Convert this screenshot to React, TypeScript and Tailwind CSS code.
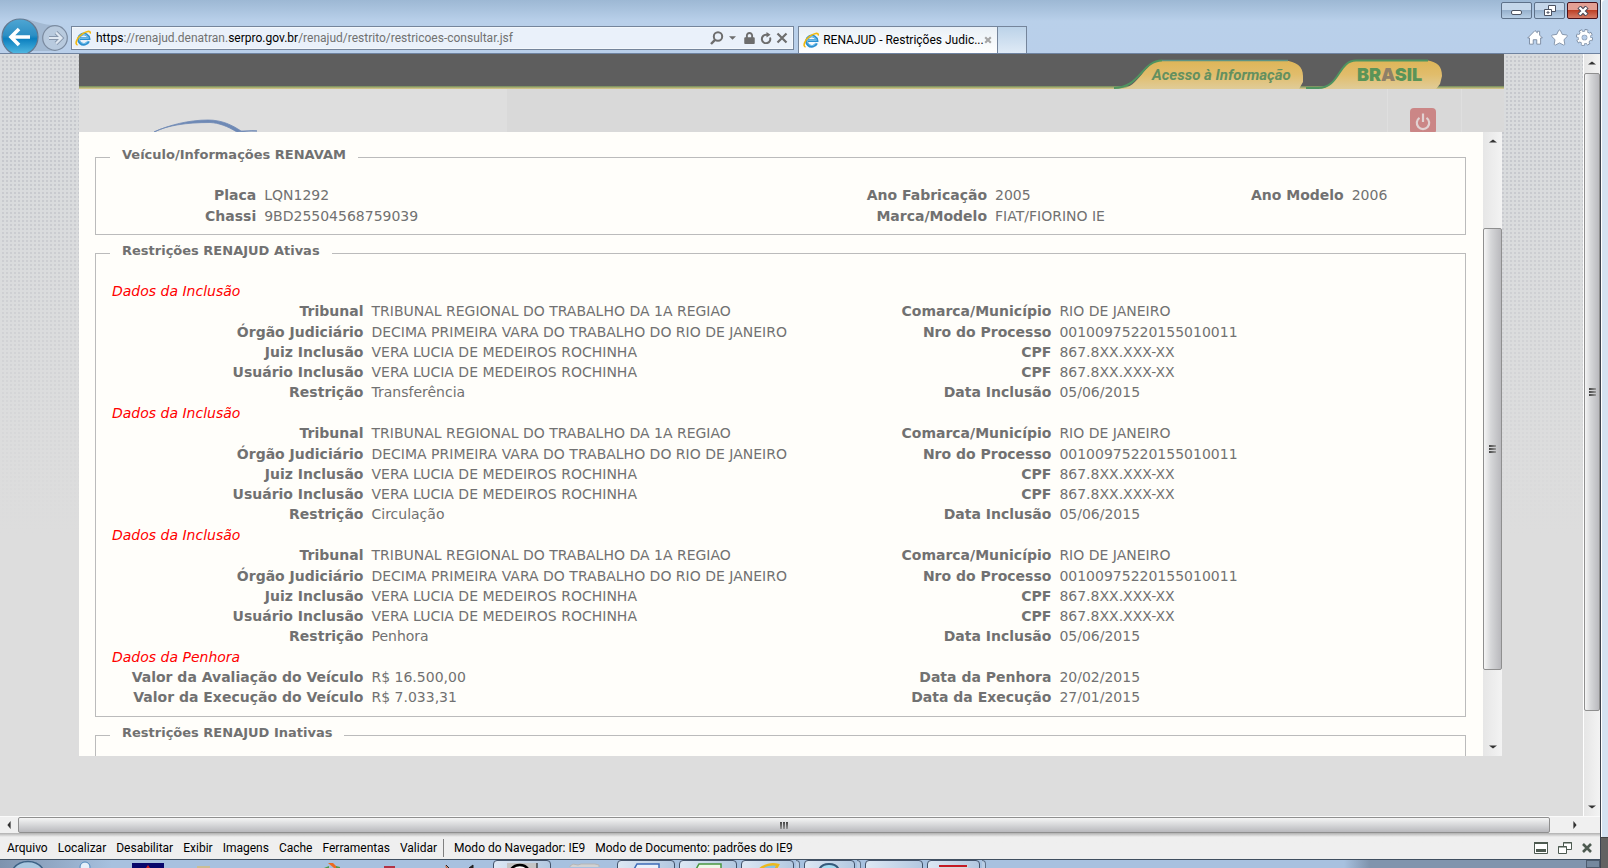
import { FaLock, FaStar } from "react-icons/fa";

const restricoes = [
  { id: 1, tipo: "Transferência" },
  { id: 2, tipo: "Circulação" },
  { id: 3, tipo: "Penhora" },
];

const devMenu = ["Arquivo", "Localizar", "Desabilitar", "Exibir", "Imagens", "Cache", "Ferramentas", "Validar"];

function IeIcon() {
  return (
    <svg viewBox="0 0 16 16" className="w-4 h-4 shrink-0" aria-hidden="true">
      <path d="M13.6 11.2A5.2 5.2 0 1 1 14 8.7H5" fill="none" stroke="#2b8fd0" strokeWidth="2.8" />
      <path d="M13 11A4.6 4.6 0 1 1 13.4 8.3H5" fill="none" stroke="#7cc6ee" strokeWidth="1" />
      <path d="M2.6 15C-.6 14.6 1.6 8 7 4.2 11 1.2 15.6 0 15.4 3.6" fill="none" stroke="#f2b90f" strokeWidth="1.6" />
    </svg>
  );
}

function Grip({ vertical }: { vertical?: boolean }) {
  return (
    <span className={vertical ? "flex flex-col gap-px" : "flex gap-px"}>
      {[0, 1, 2].map((i) => (
        <span key={i} className={vertical ? "w-[7px] h-[2px] bg-linear-to-r from-[#444] to-[#999]" : "w-[2px] h-[7px] bg-linear-to-b from-[#444] to-[#999]"} />
      ))}
    </span>
  );
}

function Arrow({ points, label }: { points: string; label: string }) {
  return (
    <button className="w-[18px] h-[18px] shrink-0 flex items-center justify-center" aria-label={label}>
      <svg viewBox="0 0 10 10" className="w-2 h-2">
        <polygon points={points} fill="#333" />
      </svg>
    </button>
  );
}

function VScroll({ className, before, thumb, after }: { className: string; before: string; thumb: string; after: string }) {
  return (
    <div className={`shrink-0 flex flex-col items-center bg-linear-to-r from-[#e6e6e6] to-[#f3f3f3] ${className}`}>
      <Arrow points="0,7 5,3 10,7" label="Rolar para cima" />
      <div className={`basis-0 ${before}`} />
      <div className={`basis-0 w-full flex items-center justify-center rounded-xs border border-[#8f8f8f] bg-linear-to-r from-[#f5f5f5] from-0% via-[#d6d7d9] via-40% to-[#b9b9bd] ${thumb}`}>
        <Grip vertical />
      </div>
      <div className={`basis-0 ${after}`} />
      <Arrow points="0,3 5,7 10,3" label="Rolar para baixo" />
    </div>
  );
}

// Barra superior do navegador
function BrowserBar() {
  return (
    <header className="h-[54px] shrink-0 flex items-end border-b border-[#6f83a0] bg-linear-to-b from-[#9db8d4] from-0% via-[#b9d0ea] via-40% to-[#b9cfea] font-['Roboto','Noto_Sans',sans-serif] text-[12px] leading-4 text-black overflow-hidden">
      <svg viewBox="0 0 71 36" className="w-[71px] h-[36px] shrink-0" role="img" aria-label="Voltar e avançar">
        <defs>
          <linearGradient id="back" x1="0" y1="0" x2="0" y2="1">
            <stop offset="0" stopColor="#4fa6d3" />
            <stop offset=".45" stopColor="#2d8fc4" />
            <stop offset=".55" stopColor="#0b7fbf" />
            <stop offset="1" stopColor="#57bde4" />
          </linearGradient>
        </defs>
        <path d="M22 2C34 2 38 8 55 8v26H20z" fill="#a3b9d2" />
        <circle cx="20" cy="20" r="18" fill="url(#back)" stroke="#65788f" strokeWidth="1.2" />
        <path d="M30 20H12M19 12l-8 8 8 8" fill="none" stroke="#fff" strokeWidth="3.6" />
        <circle cx="55" cy="21" r="12.3" fill="#b8cade" stroke="#7b8ba0" strokeWidth="1.2" />
        <path d="M49 21h11M56 15.500l5.500 5.500-5.500 5.500" fill="none" stroke="#8696ac" strokeWidth="4" />
        <path d="M49 21h11M56 15.500l5.500 5.500-5.500 5.500" fill="none" stroke="#dfe8f2" strokeWidth="2.200" />
      </svg>
      <div className="w-[45.2%] h-6 mb-[3px] flex items-center pl-[3px] pr-[5px] border border-[#75859b] bg-[#eaf1fa] outline outline-[#f4f8fc] -outline-offset-2">
        <IeIcon />
        <a href="#" className="pl-[5px] grow truncate text-[#717171]">
          <span className="text-black">https</span>://renajud.denatran.<span className="text-black">serpro.gov.br</span>/renajud/restrito/restricoes-consultar.jsf
        </a>
        <div className="flex items-center text-[#6d6d6d]">
          <svg viewBox="0 0 14 14" className="w-[14px] h-[14px]" fill="none" stroke="currentColor" strokeWidth="2">
            <circle cx="8" cy="5.500" r="4.200" />
            <path d="M5 8.800L1 13" strokeWidth="2.400" />
          </svg>
          <svg viewBox="0 0 8 4" className="w-[7px] h-1 ml-[5px] mr-2">
            <path d="M0 0h8L4 4z" fill="currentColor" />
          </svg>
          <FaLock className="w-[11px] h-3" />
          <svg viewBox="0 0 12 12" className="w-3 h-3 ml-[5px]" fill="none" stroke="currentColor" strokeWidth="2">
            <path d="M10 5.500A4.200 4.200 0 1 1 6 2.800h2.500" />
            <path d="M6.500 0L10.500 2.800 6.500 5.600z" fill="currentColor" stroke="none" />
          </svg>
          <svg viewBox="0 0 12 12" className="w-3 h-3 ml-1" fill="none" stroke="currentColor" strokeWidth="2.200">
            <path d="M1.500 1.500l9 9M10.500 1.500l-9 9" />
          </svg>
        </div>
      </div>
      <div className="ml-1 w-[200px] h-[27px] flex items-center pl-1 pr-[5px] border border-b-0 border-[#75859b] bg-linear-to-b from-[#e9f0f6] to-white">
        <IeIcon />
        <span className="pl-1 grow whitespace-nowrap">RENAJUD - Restrições Judic...</span>
        <button aria-label="Fechar guia">
          <svg viewBox="0 0 10 10" className="w-2 h-2" stroke="#a5a5a5" strokeWidth="2.600">
            <path d="M1.500 1.500l7 7M8.500 1.500l-7 7" />
          </svg>
        </button>
      </div>
      <button className="w-[29px] h-[27px] border border-b-0 border-l-0 border-[#75859b] bg-linear-to-b from-[#bcd3e9] to-[#dfeaf6]" aria-label="Nova guia" />
      <div className="grow self-stretch flex flex-col items-end justify-between pt-[2px] pb-[7px] pr-[2px]">
        <div className="flex gap-[2px]">
          <button className="w-[31px] h-[17px] flex items-center justify-center rounded-xs border border-[#5e7189] bg-linear-to-b from-[#c5d7ea] from-50% via-[#97b1cd] via-50% to-[#b7cee5]" aria-label="Minimizar">
            <span className="w-[11px] h-[5px] mt-1 rounded-xs border border-[#4c5362] bg-white" />
          </button>
          <button className="w-[31px] h-[17px] flex items-center justify-center rounded-xs border border-[#5e7189] bg-linear-to-b from-[#c5d7ea] from-50% via-[#97b1cd] via-50% to-[#b7cee5]" aria-label="Restaurar">
            <svg viewBox="0 0 12 11" className="w-3 h-[11px]" fill="#fff" stroke="#4c5362">
              <path d="M4.500.5h7v6h-7z" />
              <path d="M.5 4.500h7v6h-7z" />
              <path d="M3 7h2v1H3z" />
            </svg>
          </button>
          <button className="w-[31px] h-[17px] flex items-center justify-center rounded-xs border border-[#4a1119] bg-linear-to-b from-[#e3a094] from-50% via-[#bd4026] via-50% to-[#d47b66]" aria-label="Fechar">
            <svg viewBox="0 0 12 10" className="w-3 h-[10px]" fill="none">
              <path d="M2 1l8 8M10 1L2 9" stroke="#4c4a58" strokeWidth="4.500" />
              <path d="M2.500 1.500l7 7M9.500 1.500l-7 7" stroke="#fff" strokeWidth="2.400" />
            </svg>
          </button>
        </div>
        <div className="flex items-center gap-2 pr-[5px]">
          <svg viewBox="0 0 18 18" className="w-4 h-[17px]" fill="#fff" stroke="#76879e">
            <path d="M9 1.200l2.600 2.500V2h2.600v4.300L17.300 9.500h-2V16.500h-4.300v-5H7v5H2.800v-7h-2z" />
          </svg>
          <FaStar className="w-[17px] h-[17px] text-white overflow-visible" stroke="#76879e" strokeWidth={28} />
          <svg viewBox="0 0 18 18" className="w-[17px] h-[17px]">
            <circle cx="9" cy="9" r="7.300" fill="none" stroke="#76879e" strokeWidth="3.400" strokeDasharray="3.400 2.330" />
            <circle cx="9" cy="9" r="4.600" fill="none" stroke="#76879e" strokeWidth="5" />
            <circle cx="9" cy="9" r="7" fill="none" stroke="#fff" strokeWidth="2.200" strokeDasharray="2.400 3.098" strokeDashoffset="-.5" />
            <circle cx="9" cy="9" r="4.700" fill="none" stroke="#fff" strokeWidth="3.400" />
            <circle cx="9" cy="9" r="2.400" fill="#b9cfea" />
          </svg>
        </div>
      </div>
    </header>
  );
}

// Barra do governo + topo do sistema
function SiteHeader() {
  return (
    <div className="shrink-0">
      <div className="h-[35px] flex justify-end pr-14 bg-linear-to-b from-[#5e5e5e] from-[32px] via-[#6f8a5c] via-[32px] to-[#e0cc8c]">
        <a href="#" className="relative w-[196px] flex items-center pl-[42px] pt-[7px] font-['Roboto',sans-serif] font-bold italic text-[15px] leading-4 whitespace-nowrap text-[#64905f]">
          <svg viewBox="0 0 196 35" className="absolute inset-0 w-full h-full" aria-hidden="true">
            <defs>
              <linearGradient id="gold" x1="0" y1="0" x2="0" y2="1">
                <stop offset="0" stopColor="#deb558" />
                <stop offset=".5" stopColor="#e1bd6c" />
                <stop offset="1" stopColor="#e0cc98" />
              </linearGradient>
            </defs>
            <path d="M10 35C30 34 34 6.500 52 6.500H176C186 8 193 12 193 22V28L189 35z" fill="url(#gold)" />
            <path d="M4 34C30 34 32 6.500 52 6.500" fill="none" stroke="#4f9460" strokeWidth="2" />
            <path d="M52 6.500H178" stroke="#5f9484" strokeWidth="1.500" />
          </svg>
          <span className="relative">Acesso à Informação</span>
        </a>
        <a href="#" className="relative w-[142px] flex items-center pl-[51px] pt-[7px] font-['Inter',sans-serif] font-black text-[18px] leading-4 text-[#5a9458]">
          <svg viewBox="0 0 142 35" className="absolute inset-0 w-full h-full" aria-hidden="true">
            <path d="M14 35C34 32 32 6.500 50 6.500H122C131 8 136 12 136 22L134 30 130 35z" fill="url(#gold)" />
            <path d="M0 34H12C34 34 32 6.500 50 6.500H122" fill="none" stroke="#4f9460" strokeWidth="2" />
          </svg>
          <span className="relative">BR<span className="text-[#8f8068]">A</span>SIL</span>
        </a>
      </div>
      <div className="h-[43px] flex items-start bg-[#d9d9d9] overflow-hidden">
        <div className="w-[30%] h-full bg-[#dedede]">
          <svg viewBox="0 0 200 43" className="w-[200px] h-[43px]" role="img" aria-label="RENAJUD">
            <path d="M75 43C90 36 110 31 129 31c14 0 24 5 33 11h16c-8-1-14 1-20 1-10-6-18-9-27-9.500-24 0-43 3-56 9.500z" fill="#6e89b5" stroke="#6e89b5" strokeWidth=".8" />
          </svg>
        </div>
        <div className="grow" />
        <div className="w-[75px] h-full pt-[19px] pl-[22px] mr-[42px] border-x border-[#dfdfdf]">
          <button className="w-[26px] h-[26px] rounded-sm bg-[#cb8686] flex items-center justify-center pt-[2px]" aria-label="Sair">
            <svg viewBox="0 0 16 18" className="w-4 h-[18px]" fill="none" stroke="#e2d2d2" strokeWidth="2.200">
              <path d="M4.500 4.800a6.200 6.200 0 1 0 7 0" />
              <path d="M8 .5V9" />
            </svg>
          </button>
        </div>
      </div>
    </div>
  );
}

function Legend({ children }: { children: string }) {
  return <legend className="px-3 h-5 text-[13px] leading-4 font-bold">{children}</legend>;
}

const labelClass = "pr-1 text-right font-bold whitespace-nowrap";
const valueClass = "pl-1 text-left whitespace-nowrap";

function Row({ data, tall }: { data: string[]; tall?: boolean }) {
  return (
    <tr className={tall ? "h-[21px]" : "h-5"}>
      {data.map((text, i) =>
        i % 2 === 0 ? (
          <th key={i} scope="row" className={labelClass}>{text}</th>
        ) : (
          <td key={i} className={valueClass}>{text}</td>
        )
      )}
    </tr>
  );
}

function Grupo({ titulo, children }: { titulo: string; children: React.ReactNode }) {
  return (
    <table className="w-full table-fixed mb-px">
      <caption className="h-5 pl-[2px] text-left italic text-[#ff0000]">{titulo}</caption>
      <colgroup>
        <col className="w-[19.2%]" />
        <col className="w-[35%]" />
        <col className="w-[16.3%]" />
        <col />
      </colgroup>
      <tbody>{children}</tbody>
    </table>
  );
}

function Detalhes() {
  return (
    <main className="grow min-h-0 flex mr-[2px] bg-[#fffefa] overflow-hidden font-['DejaVu_Sans',Verdana,sans-serif] text-[14px] leading-5 text-[#717171]">
      <div className="grow min-w-0 pl-4 pr-[17px] pt-[15px]">
        <fieldset className="px-[14px] pt-[17px] pb-2 border border-[#bbb]">
          <Legend>Veículo/Informações RENAVAM</Legend>
          <table className="w-full table-fixed">
            <colgroup>
              <col className="w-[11.2%]" />
              <col className="w-[40%]" />
              <col className="w-[14.500%]" />
              <col className="w-[14%]" />
              <col className="w-[12.600%]" />
              <col />
            </colgroup>
            <tbody>
              <Row tall data={["Placa", "LQN1292", "Ano Fabricação", "2005", "Ano Modelo", "2006"]} />
              <Row tall data={["Chassi", "9BD25504568759039", "Marca/Modelo", "FIAT/FIORINO IE"]} />
            </tbody>
          </table>
        </fieldset>
        <fieldset className="mt-2 px-[14px] pt-[18px] pb-2 border border-[#bbb]">
          <Legend>Restrições RENAJUD Ativas</Legend>
          {restricoes.map((r) => (
            <Grupo key={r.id} titulo="Dados da Inclusão">
              <Row data={["Tribunal", "TRIBUNAL REGIONAL DO TRABALHO DA 1A REGIAO", "Comarca/Município", "RIO DE JANEIRO"]} />
              <Row tall data={["Órgão Judiciário", "DECIMA PRIMEIRA VARA DO TRABALHO DO RIO DE JANEIRO", "Nro do Processo", "00100975220155010011"]} />
              <Row data={["Juiz Inclusão", "VERA LUCIA DE MEDEIROS ROCHINHA", "CPF", "867.8XX.XXX-XX"]} />
              <Row data={["Usuário Inclusão", "VERA LUCIA DE MEDEIROS ROCHINHA", "CPF", "867.8XX.XXX-XX"]} />
              <Row data={["Restrição", r.tipo, "Data Inclusão", "05/06/2015"]} />
            </Grupo>
          ))}
          <Grupo titulo="Dados da Penhora">
            <Row data={["Valor da Avaliação do Veículo", "R$ 16.500,00", "Data da Penhora", "20/02/2015"]} />
            <Row data={["Valor da Execução do Veículo", "R$ 7.033,31", "Data da Execução", "27/01/2015"]} />
          </Grupo>
        </fieldset>
        <fieldset className="mt-2 px-[14px] h-[60px] border border-[#bbb]">
          <Legend>Restrições RENAJUD Inativas</Legend>
        </fieldset>
      </div>
      <VScroll className="w-[19px]" before="grow-[78]" thumb="grow-[441]" after="grow-[68]" />
    </main>
  );
}

function DevBar() {
  return (
    <div className="shrink-0 h-[27px] pt-1 border-b border-[#3f4f60] bg-linear-to-b from-[#b0b0b0] from-0% via-[#efefef] via-[4px] to-[#efefef] flex items-center px-[7px] gap-[10px] font-['Roboto','Noto_Sans',sans-serif] text-[12px] leading-4 text-black whitespace-nowrap">
      {devMenu.map((item) => (
        <button key={item}>{item}</button>
      ))}
      <span className="w-px h-[18px] -ml-1 bg-[#808080]" />
      <button>Modo do Navegador: IE9</button>
      <button>Modo de Documento: padrões do IE9</button>
      <div className="grow flex justify-end items-center gap-[10px] pr-px text-[#4d5a50]">
        <button aria-label="Minimizar painel">
          <svg viewBox="0 0 14 12" className="w-[14px] h-3" fill="#fff" stroke="currentColor">
            <path d="M.5.500h13v11H.5z" />
            <path d="M0 1h14" strokeWidth="2" />
            <path d="M2 8.500h10" strokeWidth="3" />
          </svg>
        </button>
        <button aria-label="Desencaixar painel">
          <svg viewBox="0 0 14 12" className="w-[14px] h-3" fill="#fff" stroke="currentColor">
            <path d="M5.500.500h8v7h-8zM5 1h9" />
            <path d="M.5 4.500h8v7h-8zM0 5h9" />
          </svg>
        </button>
        <button aria-label="Fechar painel">
          <svg viewBox="0 0 10 10" className="w-[10px] h-[10px]" stroke="currentColor" strokeWidth="2.600">
            <path d="M1 1l8 8M9 1L1 9" />
          </svg>
        </button>
      </div>
    </div>
  );
}

const atalhos = [
  <circle key="a" cx="15" cy="7" r="5" fill="#e6f0fa" stroke="#4e88bd" />,
  <g key="b"><path d="M0 3h32v8H0z" fill="#06066b" /><path d="M14 8l2-3 2 3z" fill="#c22" /></g>,
  <path key="c" d="M3 6h13v6H3z" fill="#c9bd95" />,
  null,
  <g key="e"><path d="M10 3h5l5 5h-4z" fill="#ec6a1f" /><path d="M6 8l5-2v2zM18 6l4 1v1h-4z" fill="#4f9b49" /></g>,
  <path key="f" d="M4 6h11v5H4z" fill="#b23345" />,
  <g key="g"><path d="M3 5l3 3H4z" fill="#d9622b" /><path d="M4 5l3 3M27 8l4-3v3z" fill="#222" stroke="#222" /></g>,
];

const janelas = [
  { w: "w-[58px]", stack: false, icon: <g><path d="M0 2h30v8H0z" fill="#c4c4c4" /><path d="M3 10C7 2 19 2 22 10" fill="#fff" stroke="#000" strokeWidth="2.500" /><path d="M30 2v7" stroke="#000" /></g> },
  { w: "w-[58px]", stack: false, icon: <path d="M1 9V6l3-2 5 1 3-1h14l4 1v6z" fill="#d2d2d2" stroke="#b5b5b5" />, flat: true },
  { w: "w-[58px]", stack: false, icon: <path d="M2 10l4-7h22v7" fill="#e9f0fb" stroke="#3e6bb8" strokeWidth="1.500" /> },
  { w: "w-[58px]", stack: false, icon: <path d="M2 10l4-7h22v7" fill="#eef6e9" stroke="#4a9640" strokeWidth="1.500" /> },
  { w: "w-[53px]", stack: true, icon: <path d="M7 9C12 4 20 2 26 4l-3 5" fill="#84c3ea" stroke="#ecb81c" strokeWidth="2.500" /> },
  { w: "w-[51px]", stack: true, icon: <path d="M5 9C8 1 22 1 25 9" fill="#a6dcf2" stroke="#35597a" strokeWidth="2" /> },
  { w: "w-[58px]", stack: false, icon: null },
  { w: "w-[53px]", stack: true, icon: <g><path d="M2 4h28v6H2z" fill="#d8d8d8" /><path d="M1 5h28" stroke="#c51a24" strokeWidth="2" /></g> },
];

function TaskBar() {
  return (
    <div className="shrink-0 h-2 flex overflow-hidden bg-linear-to-r from-[#7e93ae] from-0% via-[#a7c1df] via-7% to-[#a7c1df]">
      <button className="w-[55px] flex justify-center" aria-label="Iniciar">
        <svg viewBox="0 0 30 8" className="w-[30px] h-2">
          <path d="M0 9C7-1 23-1 30 9z" fill="#a9c7df" stroke="#3d6285" strokeWidth="1.500" />
        </svg>
      </button>
      {atalhos.map((icon, i) => (
        <span key={i} className="w-[62px] flex justify-center shrink-0">
          <svg viewBox="0 0 32 8" className="w-8 h-2">{icon}</svg>
        </span>
      ))}
      <div className="flex gap-1 pl-1">
        {janelas.map((j, i) => (
          <div key={i} className="flex gap-[2px]">
            <span className={`${j.w} h-3 flex justify-center ${j.flat ? "" : "rounded-sm border border-[#43536a] bg-linear-to-r from-[#dde8f4] to-[#b3c8e0]"}`}>
              <svg viewBox="0 0 31 7" className="w-[31px] h-[7px]">{j.icon}</svg>
            </span>
            {j.stack && <span className="w-1 h-3 rounded-tr-sm border-t border-r border-[#5f7289] bg-[#b9cde4]" />}
          </div>
        ))}
      </div>
      <span className="grow" />
      <span className="w-[16%] flex justify-end bg-linear-to-r from-[#a7c1df] from-0% via-[#8094ad] via-10% to-[#8094ad]">
        <span className="w-[14px] border border-[#4c5b6e] bg-[#75889e]" />
      </span>
    </div>
  );
}

export default function App() {
  return (
    <div className="h-screen w-full flex overflow-hidden">
      <div className="grow min-w-0 flex flex-col border-r border-[#3d4450]">
        <BrowserBar />
        <div className="grow min-h-0 flex">
          <div className="grow min-w-0 flex flex-col bg-[#dddddd] bg-[linear-gradient(to_bottom,transparent_100px,#dddddd_480px),conic-gradient(from_90deg_at_2px_2px,#c6c8cd_25%,#d9dbdd_0)] bg-[size:100%_100%,4px_4px]">
            <div className="grow min-h-0 flex flex-col mx-[79px]">
              <SiteHeader />
              <Detalhes />
            </div>
            <div className="h-[60px] shrink-0 bg-[#dddddd]" />
          </div>
          <VScroll className="w-[17px] border-l border-white" before="grow-[1]" thumb="grow-[640]" after="grow-[87]" />
        </div>
        <div className="shrink-0 h-[17px] flex items-center border-t border-[#fafafa] bg-[#f0f0f0] overflow-hidden">
          <Arrow points="7,0 3,5 7,10" label="Rolar para a esquerda" />
          <div className="grow h-full flex items-center justify-center rounded-xs border border-[#8f8f8f] bg-linear-to-b from-[#f5f5f5] from-0% via-[#d6d7d9] via-50% to-[#b9b9bd]">
            <Grip />
          </div>
          <div className="w-4" />
          <Arrow points="3,0 7,5 3,10" label="Rolar para a direita" />
          <div className="w-4" />
        </div>
        <DevBar />
        <TaskBar />
      </div>
      <div className="w-[7px] shrink-0 flex flex-col">
        <div className="grow rounded-tl-sm border-l border-white bg-[#d4e2f1]" />
        <div className="h-[31px] border-t border-[#444] bg-[#626262]" />
      </div>
    </div>
  );
}
